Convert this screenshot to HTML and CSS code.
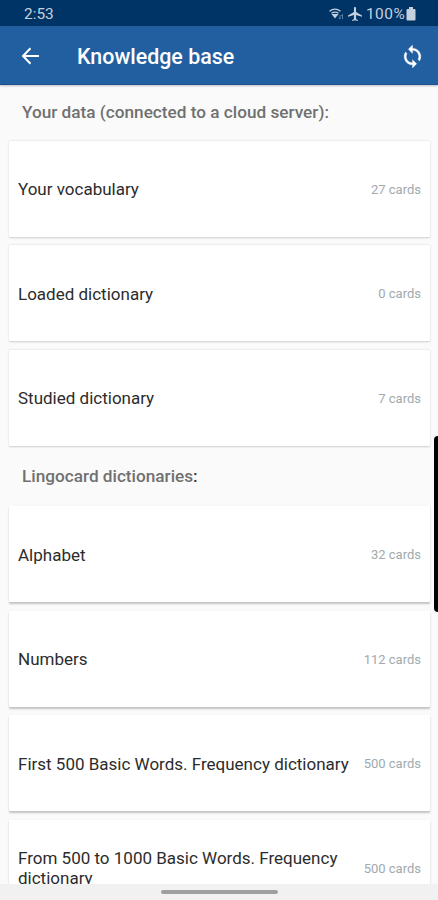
FILE: index.html
```
<!DOCTYPE html>
<html lang="en">
<head>
    <meta charset="utf-8">
    <title>Knowledge base</title>
    <link rel="stylesheet" href="styles.css">
</head>
<body>
    <div class="status-bar">
        <span class="time">2:53</span>
        <div class="status-icons">
            <svg class="wifi" width="16" height="13" viewBox="0 0 16 13">
                <path d="M.5 3.200Q6 -1 11.500 3.200M2.500 5.300Q6 3 9.500 5.300" fill="none" stroke="currentColor" stroke-width="1.300"/>
                <path d="M2.500 6h7L6 10.500z" fill="currentColor"/>
                <path d="M11 7v4M9.800 9.700l1.200 1.500M13.500 11V6.500M12.300 8l1.200-1.500" fill="none" stroke="currentColor" stroke-width="0.800" opacity="0.600"/>
            </svg>
            <svg class="plane" width="14" height="14" viewBox="2 2 20 20">
                <path d="M22 16v-2l-8.500-5V3.500C13.500 2.670 12.830 2 12 2s-1.500.67-1.500 1.500V9L2 14v2l8.500-2.500V19L8 20.500V22l4-1 4 1v-1.500L13.500 19v-5.500z" fill="currentColor"/>
            </svg>
            <span class="percent">100%</span>
            <svg class="battery" width="10" height="14" viewBox="0 0 10 14">
                <path d="M3 0h4v2h1.500q1 0 1 1v9.500q0 1-1 1h-7q-1 0-1-1V3q0-1 1-1H3z" fill="currentColor"/>
            </svg>
        </div>
    </div>

    <header class="app-bar">
        <svg class="back" width="18" height="18" viewBox="0 0 18 18">
            <path d="M18 9H2M9.500 1.300L2 9L9.500 16.700" fill="none" stroke="currentColor" stroke-width="2"/>
        </svg>
        <h1>Knowledge base</h1>
        <svg class="sync" width="25" height="25" viewBox="0 0 24 24">
            <path d="M12 4V1L8 5l4 4V6c3.310 0 6 2.690 6 6 0 1.010-.25 1.970-.7 2.800l1.460 1.460C19.540 15.030 20 13.570 20 12c0-4.420-3.580-8-8-8zm0 14c-3.310 0-6-2.690-6-6 0-1.010.25-1.970.7-2.800L5.240 7.740C4.460 8.970 4 10.430 4 12c0 4.420 3.580 8 8 8v3l4-4-4-4v3z" fill="currentColor" stroke="currentColor" stroke-width="0.300"/>
        </svg>
    </header>

    <main>
        <h2>Your data (connected to a cloud server):</h2>
        <div class="cards">
            <div class="card"><span class="name">Your vocabulary</span><span class="count">27 cards</span></div>
            <div class="card"><span class="name">Loaded dictionary</span><span class="count">0 cards</span></div>
            <div class="card"><span class="name">Studied dictionary</span><span class="count">7 cards</span></div>
        </div>

        <h2 class="second">Lingocard dictionaries<span class="colon">:</span></h2>
        <div class="cards raised">
            <div class="card"><span class="name">Alphabet</span><span class="count">32 cards</span></div>
            <div class="card"><span class="name">Numbers</span><span class="count">112 cards</span></div>
            <div class="card"><span class="name">First 500 Basic Words. Frequency dictionary</span><span class="count">500 cards</span></div>
            <div class="card"><span class="name">From 500 to 1000 Basic Words. Frequency dictionary</span><span class="count">500 cards</span></div>
        </div>
    </main>

    <footer class="nav-bar"><div class="handle"></div></footer>
    <div class="edge-panel"></div>
</body>
</html>
```
FILE: styles.css
```
* {
    box-sizing: border-box;
}

body {
    margin: 0;
    height: 900px;
    position: relative;
    display: flex;
    flex-direction: column;
    overflow: hidden;
    background-color: #fafafa;
    font-family: Roboto, sans-serif;
}

.status-bar {
    flex: none;
    height: 26px;
    padding: 2px 22px 0 24px;
    display: flex;
    align-items: center;
    justify-content: space-between;
    background-color: #003466;
    color: #c5d0df;
    font-size: 15.4px;
}

.status-icons {
    display: flex;
    align-items: center;
}

.wifi {
    margin-right: 3px;
}

.percent {
    margin-left: 4px;
    letter-spacing: 0.6px;
}

.battery {
    margin-left: 0.5px;
}

.app-bar {
    flex: none;
    height: 59px;
    padding: 2px 13px 0 21px;
    display: flex;
    align-items: center;
    background-color: #225fa0;
    border-bottom: 1px solid #1b528f;
    box-shadow: 0 1px 2px rgba(0, 0, 0, 0.25);
    color: #fff;
    z-index: 1;
}

h1 {
    flex: 1;
    margin: 1px 0 0 38px;
    font-size: 21.4px;
    font-weight: 500;
}

main {
    flex: 1;
    min-height: 0;
    overflow: hidden;
    padding: 0 8px 0 9px;
}

h2 {
    height: 55.5px;
    margin: 0;
    padding: 0 13px 2px;
    display: flex;
    align-items: center;
    font-size: 17.2px;
    font-weight: 500;
    color: #707070;
}

.second {
    height: 60.5px;
    padding-bottom: 0;
}

.colon {
    color: #333;
}

.cards {
    display: flex;
    flex-direction: column;
    gap: 8.6px;
}

.card {
    height: 96px;
    padding: 1px 9px 0;
    display: flex;
    align-items: center;
    justify-content: space-between;
    background-color: #fff;
    border-radius: 1px;
    box-shadow: 0 0.5px 2px rgba(0, 0, 0, 0.18);
}

.raised .card {
    box-shadow: 0 1.5px 2px rgba(0, 0, 0, 0.22);
}

.name {
    max-width: 335px;
    font-size: 17px;
    line-height: 20px;
    color: #2c2c2c;
}

.count {
    font-size: 13px;
    color: #a0aaae;
    white-space: nowrap;
}

/* gesture bar at the bottom */
.nav-bar {
    flex: none;
    height: 16px;
    padding-top: 6px;
    background-color: #f1f1f1;
    z-index: 1;
}

.handle {
    width: 117px;
    height: 4px;
    margin: 0 auto;
    border-radius: 2px;
    background-color: #a0a0a0;
}

/* edge panel handle over the list */
.edge-panel {
    position: absolute;
    top: 436px;
    right: 0;
    width: 4px;
    height: 176px;
    border-radius: 4px 0 0 4px;
    background-color: #000;
    z-index: 2;
}
```
